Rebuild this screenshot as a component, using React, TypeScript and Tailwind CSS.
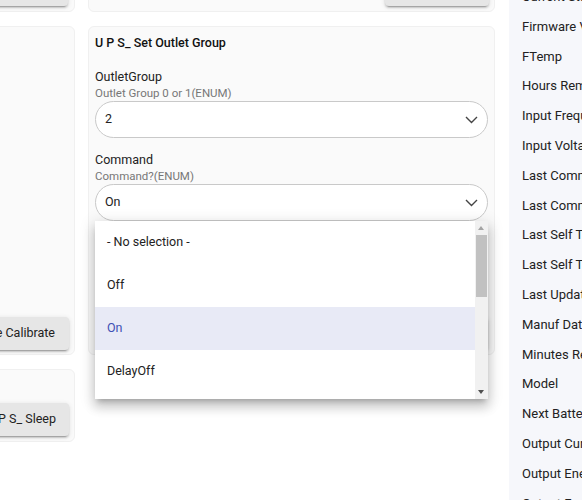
import React from "react";

const card = "bg-[#fafafa] border border-[#f0f0f0] rounded-[6px]";
const btn =
  "h-[33px] rounded-[4px] bg-[#e6e6e6] px-[14px] text-[12.5px] text-[#222] whitespace-nowrap flex items-center shadow-[0_3px_1px_-2px_rgba(0,0,0,0.2),0_2px_2px_0_rgba(0,0,0,0.14),0_1px_5px_0_rgba(0,0,0,0.12)]";

const sensors = [
  "Current State",
  "Firmware Version",
  "FTemp",
  "Hours Remaining",
  "Input Frequency",
  "Input Voltage",
  "Last Command",
  "Last Command Result",
  "Last Self Test",
  "Last Self Test Result",
  "Last Update",
  "Manuf Date",
  "Minutes Remaining",
  "Model",
  "Next Battery Replacement",
  "Output Current",
  "Output Energy",
  "Output Frequency",
];

const options = ["- No selection -", "Off", "On", "DelayOff", "DelayOn"];

const Chevron = () => (
  <svg width="13" height="8" viewBox="0 0 13 8" className="flex-none">
    <polyline
      points="1,1 6.5,6.5 12,1"
      fill="none"
      stroke="#444"
      strokeWidth="1.4"
    />
  </svg>
);

const Select: React.FC<{ value: string; children?: React.ReactNode }> = ({
  value,
  children,
}) => (
  <div className="relative">
    <div className="h-[37px] rounded-full border border-[#c9c9c9] bg-white flex items-center justify-between pl-[9px] pr-[9px] text-[12.5px] text-[#222]">
      <span>{value}</span>
      <Chevron />
    </div>
    {children}
  </div>
);

const Dropdown: React.FC<{ selected: string }> = ({ selected }) => (
  <div className="absolute left-0 right-0 top-full z-10 h-[178px] overflow-hidden bg-white shadow-[0_5px_5px_-3px_rgba(0,0,0,0.2),0_8px_10px_1px_rgba(0,0,0,0.14),0_3px_14px_2px_rgba(0,0,0,0.12)]">
    <div className="mr-[13px]">
      {options.map((o) => (
        <div
          key={o}
          className={
            "h-[43px] flex items-center pl-[12px] text-[12.5px] " +
            (o === selected ? "bg-[#e8eaf6] text-[#3f51b5]" : "text-[#222]")
          }
        >
          {o}
        </div>
      ))}
    </div>
    {/* scrollbar */}
    <div className="absolute right-0 top-0 bottom-0 w-[13px] bg-[#f1f1f1]">
      <div className="absolute left-[3px] top-[5px] w-0 h-0 border-l-[3.5px] border-r-[3.5px] border-b-[4px] border-l-transparent border-r-transparent border-b-[#a3a3a3]" />
      <div className="absolute left-[1px] right-[1px] top-[14px] h-[62px] bg-[#c1c1c1]" />
      <div className="absolute left-[3px] bottom-[5px] w-0 h-0 border-l-[3.5px] border-r-[3.5px] border-t-[4px] border-l-transparent border-r-transparent border-t-[#505050]" />
    </div>
  </div>
);

export default function App() {
  return (
    <div className="w-[582px] h-[500px] overflow-hidden bg-white flex items-start font-['Roboto',sans-serif]">
      {/* left column */}
      <div className="w-[200px] -ml-[125px] flex-none -mt-[60px] flex flex-col gap-[14px]">
        <div className={`${card} h-[72px] flex items-end justify-end pb-[5px] pr-[6px]`}>
          <div className={btn}>U P S_ Self Test</div>
        </div>
        <div className={`${card} h-[329px] flex items-end justify-end pb-[4px] pr-[5px]`}>
          <div className={btn}>U P S_ Runtime Calibrate</div>
        </div>
        <div className={`${card} h-[73px] flex items-end justify-end pb-[5px] pr-[5px]`}>
          <div className={`${btn} pr-[13px]`}>U P S_ Sleep</div>
        </div>
      </div>

      {/* command cards */}
      <div className="ml-[13px] w-[407px] flex-none -mt-[60px] flex flex-col gap-[14px]">
        <div className={`${card} h-[72px] flex items-end justify-end pb-[5px] pr-[5px]`}>
          <div className={`${btn} w-[104px]`}>U P S_ Reboot</div>
        </div>
        <div className={`${card} h-[329px] flex flex-col pt-[6px] px-[6px] pb-[4px]`}>
          <div className="h-[20px] leading-[20px] text-[12.5px] font-medium text-[#111]">
            U P S_ Set Outlet Group
          </div>
          <div className="mt-[14px] leading-[19px] text-[12.5px] text-[#222]">OutletGroup</div>
          <div className="leading-[15px] text-[11.5px] text-[#777]">Outlet Group 0 or 1(ENUM)</div>
          <Select value="2" />
          <div className="mt-[12px] leading-[19px] text-[12.5px] text-[#222]">Command</div>
          <div className="leading-[15px] text-[11.5px] text-[#777]">Command?(ENUM)</div>
          <Select value="On">
            <Dropdown selected="On" />
          </Select>
          <div className="mt-auto self-end">
            <div className={btn}>U P S_ Set Outlet Group</div>
          </div>
        </div>
      </div>

      {/* sensor list */}
      <div className="ml-[14px] w-[200px] flex-none self-stretch bg-[#f6f7fb] overflow-hidden">
        <div className="-mt-[18px] pl-[13px]">
          {sensors.map((s) => (
            <div key={s} className="h-[29.8px] leading-[29.8px] text-[13px] text-[#222] whitespace-nowrap">
              {s}
            </div>
          ))}
        </div>
      </div>
    </div>
  );
}
